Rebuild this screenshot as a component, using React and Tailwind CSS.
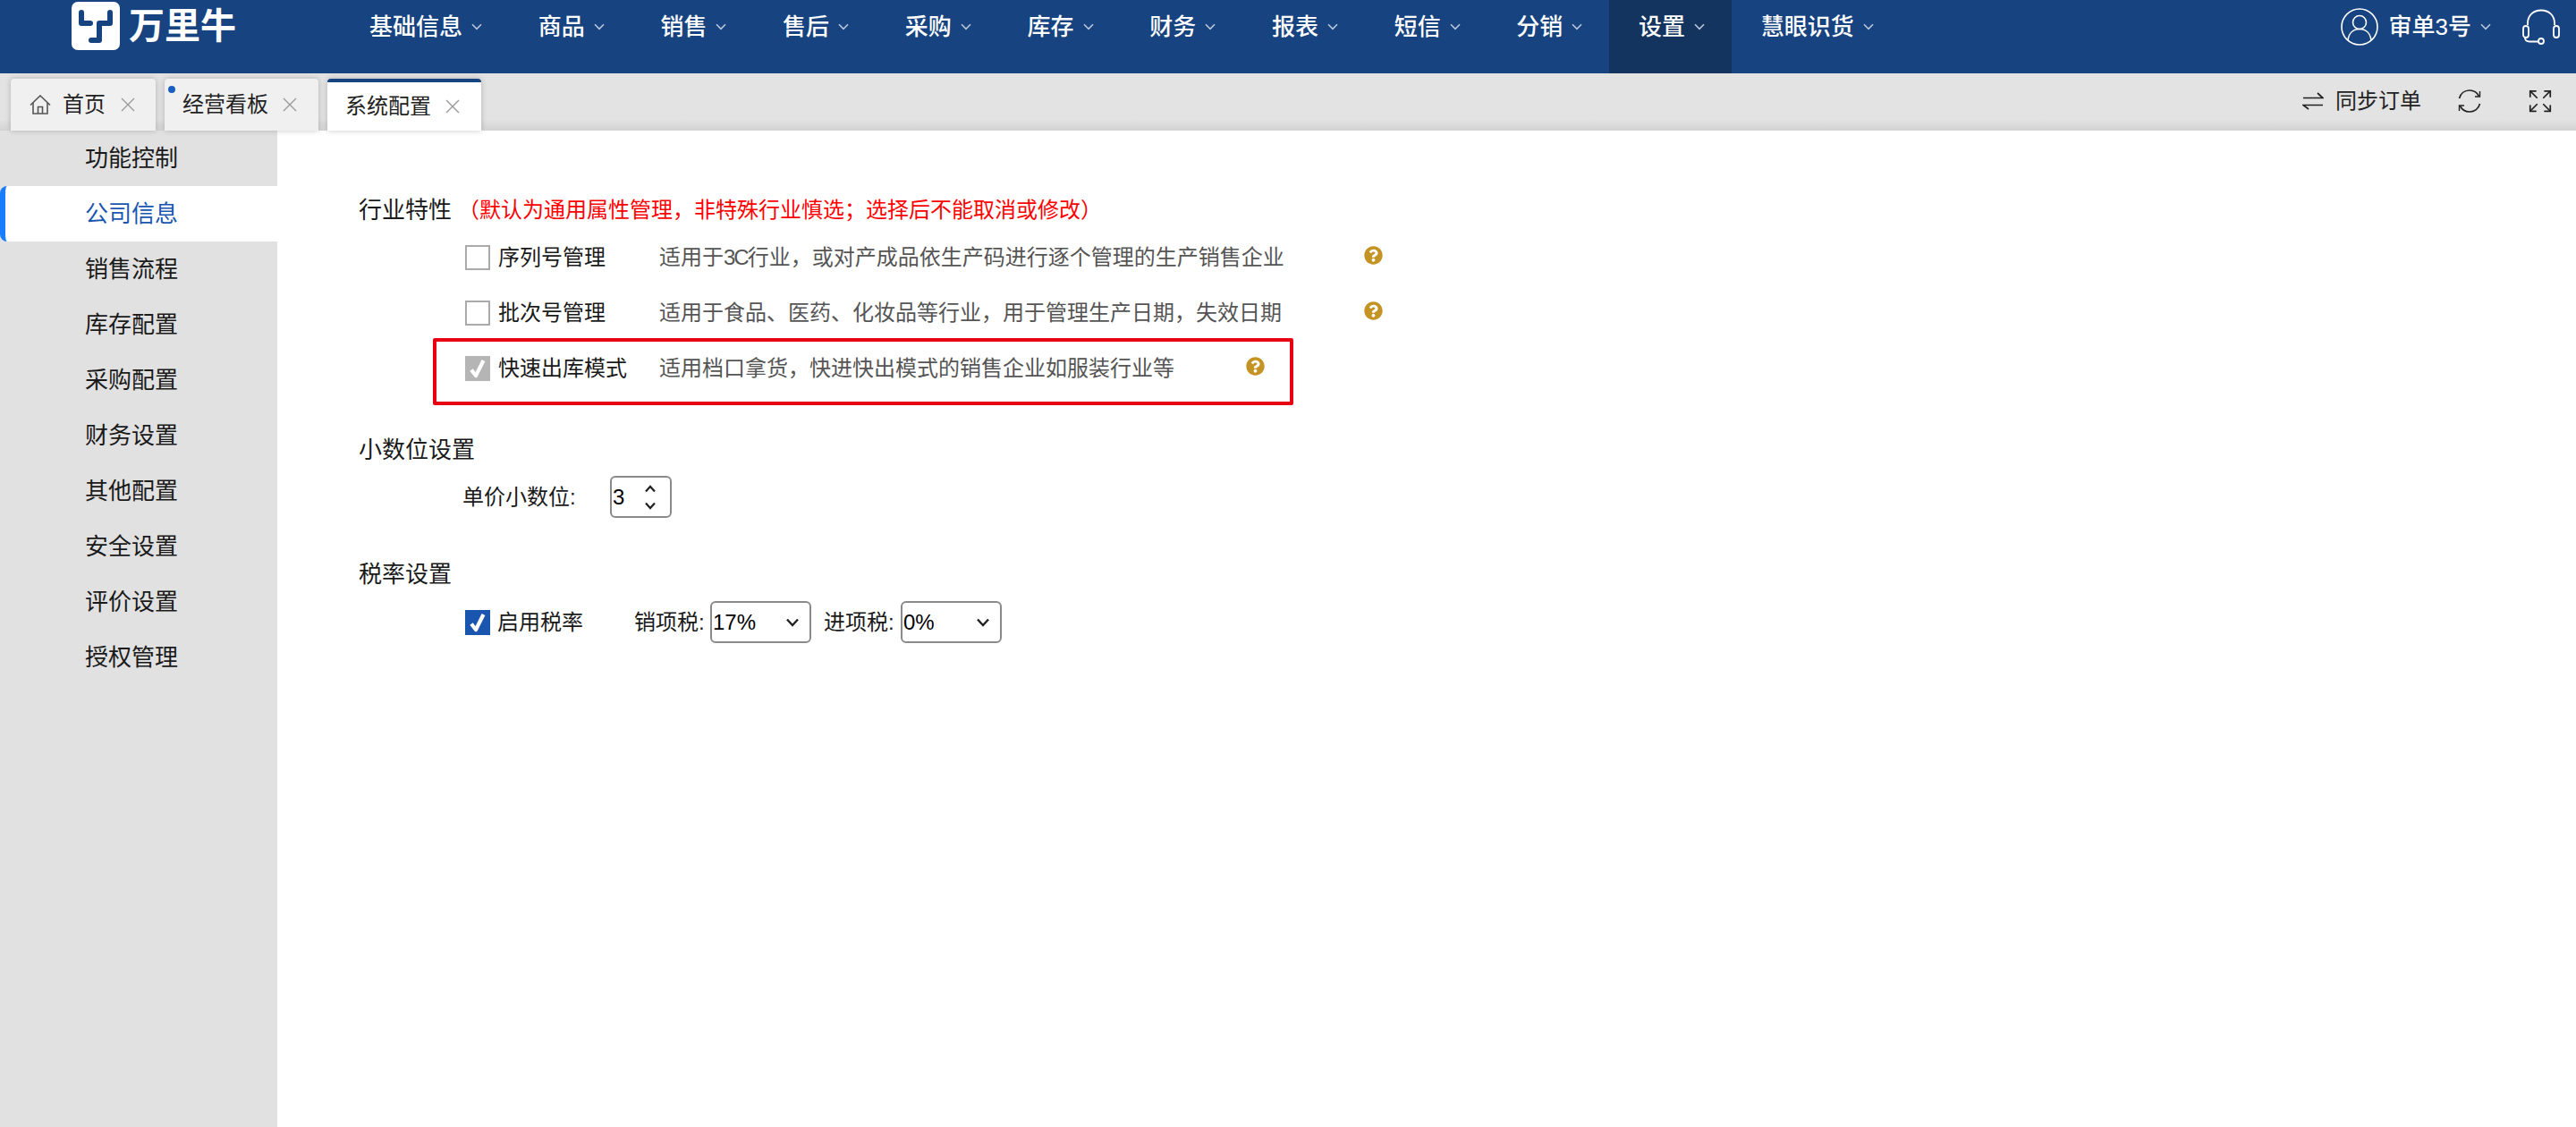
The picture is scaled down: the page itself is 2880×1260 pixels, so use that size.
import { Expand } from "lucide-react";
import { FaQuestionCircle } from "react-icons/fa";

const NAV_ITEMS = ["基础信息", "商品", "销售", "售后", "采购", "库存", "财务", "报表", "短信", "分销", "设置", "慧眼识货"];
const SIDE_ITEMS = ["功能控制", "公司信息", "销售流程", "库存配置", "采购配置", "财务设置", "其他配置", "安全设置", "评价设置", "授权管理"];

// fullwidth punctuation is escaped so it stays fullwidth
const NOTICE = "\uFF08默认为通用属性管理\uFF0C非特殊行业慎选\uFF1B选择后不能取消或修改\uFF09";
const DESC_SERIAL = (
  <>
    适用于<span className="tracking-[-2px]">3C</span>
    {"行业\uFF0C或对产成品依生产码进行逐个管理的生产销售企业"}
  </>
);
const DESC_BATCH = "适用于食品、医药、化妆品等行业\uFF0C用于管理生产日期\uFF0C失效日期";
const DESC_QUICK = "适用档口拿货\uFF0C快进快出模式的销售企业如服装行业等";

const Chevron = ({ className = "" }) => (
  <svg width="12" height="8" viewBox="0 0 12 8" fill="none" stroke="currentColor" strokeWidth="1.6" className={className}>
    <path d="M1 1.2 6 6.4 11 1.2" />
  </svg>
);

const Logo = () => (
  <div className="flex items-center mt-[-24px] ml-[80px]">
    <div className="w-[54px] h-[54px] bg-white rounded-[7px]">
      <svg width="54" height="54" viewBox="0 0 54 54" fill="none" stroke="#174380" strokeWidth="6" strokeLinejoin="round" strokeLinecap="round">
        <path d="M11 12V24H21" />
        <path d="M43 12V24H31V43H22" />
      </svg>
    </div>
    <span className="ml-[10px] text-[40px] leading-[54px] font-semibold text-white">万里牛</span>
  </div>
);

const Header = () => (
  <header className="flex h-[82px] bg-[#174380] text-white shrink-0">
    <div className="w-[380px] flex items-center">
      <Logo />
    </div>
    <nav className="flex">
      {NAV_ITEMS.map((item) => (
        <div
          key={item}
          className={`flex items-center gap-[10px] h-[82px] pl-[33px] pr-[29.7px] pb-[22px] text-[26px] font-medium ${item === "设置" ? "bg-[#143460]" : ""}`}
        >
          <span>{item}</span>
          <Chevron className="text-[#b9c6da]" />
        </div>
      ))}
    </nav>
    <div className="ml-auto flex items-center pb-[22px] pr-[18px]">
      <svg width="42" height="42" viewBox="0 0 42 42" fill="none" stroke="white" strokeWidth="1.6">
        <circle cx="21" cy="21" r="20" />
        <circle cx="21" cy="16" r="7.5" />
        <path d="M8 36c1-8 6-12.500 13-12.500S33 28 34 36" />
      </svg>
      <span className="ml-[12px] text-[26px] font-medium">审单3号</span>
      <Chevron className="ml-[10px] text-[#b9c6da]" />
      <svg width="42" height="40" viewBox="0 0 42 40" fill="none" stroke="white" strokeWidth="1.8" className="ml-[35px]">
        <path d="M6 18V16C6 7 12.500 1.500 21 1.500S36 7 36 16V18" />
        <rect x="1" y="19" width="6" height="13" rx="3" />
        <rect x="35" y="19" width="6" height="13" rx="3" />
        <path d="M3 32c0 3 2 4.500 5 4.500H18" />
        <circle cx="21" cy="36" r="3" />
      </svg>
    </div>
  </header>
);

const CloseIcon = () => (
  <svg width="16" height="16" viewBox="0 0 16 16" stroke="#9a9a9a" strokeWidth="1.4" fill="none">
    <path d="M1 1 15 15M15 1 1 15" />
  </svg>
);

const HomeIcon = () => (
  <svg width="24" height="22" viewBox="0 0 24 22" fill="none" stroke="#555" strokeWidth="1.6">
    <path d="M1 11.500 12 1 23 11.500" />
    <path d="M4 9V21H20V9" />
    <path d="M9.500 21V13.500H14.500V21" />
  </svg>
);

const Tab = ({ label, active, home, dot, widthClass, padClass, gapClass }) => (
  <div
    className={`relative flex items-center h-[58px] rounded-t-[4px] shadow-[0_0_6px_rgba(0,0,0,0.22)] text-[24px] text-[#222] ${widthClass} ${padClass} ${
      active ? "bg-white border-t-[4px] border-[#174380]" : "bg-[#f0f0f0]"
    }`}
  >
    {dot && <span className="absolute left-[4px] top-[8px] w-[8px] h-[8px] rounded-full bg-[#1a5dc0]" />}
    {home && (
      <span className="mr-[13px]">
        <HomeIcon />
      </span>
    )}
    <span>{label}</span>
    <span className={gapClass}>
      <CloseIcon />
    </span>
  </div>
);

const TabBar = () => (
  <div className="flex h-[64px] shrink-0 pl-[12px] pr-[25px] bg-linear-to-b from-[#e3e3e3] from-[80%] to-[#d3d3d3]">
    <div className="flex items-end gap-[10px]">
      <Tab label="首页" home widthClass="w-[162px]" padClass="pl-[21px]" gapClass="ml-[17px]" />
      <Tab label="经营看板" dot widthClass="w-[172px]" padClass="pl-[20px]" gapClass="ml-[16px]" />
      <Tab label="系统配置" active widthClass="w-[172px]" padClass="pl-[20px]" gapClass="ml-[16px]" />
    </div>
    <div className="ml-auto flex items-center h-[62px] text-[24px] text-[#222]">
      <svg width="24" height="22" viewBox="0 0 24 22" fill="none" stroke="#222" strokeWidth="1.7">
        <path d="M1 7.500H23L17 2" />
        <path d="M23 15.500H1L7 20" />
      </svg>
      <span className="ml-[13px]">同步订单</span>
      <svg width="28" height="28" viewBox="0 0 28 28" fill="none" stroke="#222" strokeWidth="1.7" className="ml-[40px]">
        <path d="M2.500 11C4 5.500 8.500 2 14 2c4.500 0 8.500 2.500 10.500 6.500" />
        <path d="M25.500 17C24 22.500 19.500 26 14 26c-4.500 0-8.500-2.500-10.500-6.500" />
        <path d="M25.500 3V9H20" strokeWidth="1.4" />
        <path d="M2.500 25V19H8" strokeWidth="1.4" />
      </svg>
      <Expand size={30} strokeWidth={1.4} color="#222" className="ml-[50px]" />
    </div>
  </div>
);

const Sidebar = () => (
  <aside className="w-[310px] shrink-0 bg-[#e1e1e1] text-[26px] text-[#1a1a1a]">
    {SIDE_ITEMS.map((item) =>
      item === "公司信息" ? (
        <div key={item} className="flex items-center h-[62px] pl-[89px] bg-white border-l-[6px] border-[#1a7dff] rounded-l-[8px] text-[#1a56b0]">
          {item}
        </div>
      ) : (
        <div key={item} className="flex items-center h-[62px] pl-[95px]">
          {item}
        </div>
      )
    )}
  </aside>
);

const CheckBox = ({ state }) => {
  if (state === "off") return <span className="block w-[28px] h-[28px] border-2 border-[#aaa] bg-white" />;
  return (
    <span className={`flex items-center justify-center w-[28px] h-[28px] ${state === "disabled" ? "bg-[#b5b5b5]" : "bg-[#1a56b0]"}`}>
      <svg width="20" height="22" viewBox="0 0 20 22" fill="none" stroke="white" strokeWidth="4.2" strokeLinejoin="round">
        <path d="M3 12.500 8 19 16.500 2" />
      </svg>
    </span>
  );
};

const FeatureRow = ({ state, label, desc, descWidth, children }) => (
  <div className="relative flex items-center h-[62px] pl-[119px]">
    <CheckBox state={state} />
    <span className="ml-[9px] w-[180px] text-[24px] text-[#1a1a1a]">{label}</span>
    <span className={`text-[24px] text-[#555] ${descWidth}`}>{desc}</span>
    <FaQuestionCircle size={21} color="#c49323" className="mt-[-5px]" />
    {children}
  </div>
);

const Spinner = () => (
  <div className="flex items-center justify-between w-[69px] h-[47px] pl-[1px] pr-[15px] border-2 border-[#8a8a8a] rounded-[6px] text-[24px] text-black">
    <span>3</span>
    <svg width="14" height="28" viewBox="0 0 14 28" fill="none" stroke="#222" strokeWidth="2.2">
      <path d="M2 7.500 7 2 12 7.500" />
      <path d="M2 20.500 7 26 12 20.500" />
    </svg>
  </div>
);

const SelectBox = ({ value }) => (
  <div className="flex items-center justify-between w-[113px] h-[47px] pl-[1px] pr-[11px] border-2 border-[#8a8a8a] rounded-[6px] text-[24px] text-black">
    <span>{value}</span>
    <svg width="16" height="10" viewBox="0 0 16 10" fill="none" stroke="#222" strokeWidth="2.4">
      <path d="M2 1.500 8 8 14 1.500" />
    </svg>
  </div>
);

const SectionTitle = ({ children, className = "" }) => (
  <div className={`flex items-center h-[36px] text-[26px] text-[#1a1a1a] ${className}`}>{children}</div>
);

const Content = () => (
  <main className="flex-1 bg-white pt-[71px] pl-[91px]">
    <SectionTitle>
      行业特性
      <span className="ml-[7px] text-[24px] text-[#f00]">{NOTICE}</span>
    </SectionTitle>
    <div className="mt-[4px]">
      <FeatureRow state="off" label="序列号管理" desc={DESC_SERIAL} descWidth="w-[788px]" />
      <FeatureRow state="off" label="批次号管理" desc={DESC_BATCH} descWidth="w-[788px]" />
      <FeatureRow state="disabled" label="快速出库模式" desc={DESC_QUICK} descWidth="w-[656px]">
        <div className="absolute left-[83px] top-[-3px] w-[962px] h-[75px] border-4 border-[#e60012] rounded-[2px]" />
      </FeatureRow>
    </div>

    <SectionTitle className="mt-[42px]">小数位设置</SectionTitle>
    <div className="flex items-center mt-[11px] pl-[116px]">
      <span className="w-[165px] text-[24px] text-[#1a1a1a]">单价小数位:</span>
      <Spinner />
    </div>

    <SectionTitle className="mt-[45px]">税率设置</SectionTitle>
    <div className="flex items-center mt-[12px] pl-[119px] text-[24px] text-[#1a1a1a]">
      <CheckBox state="on" />
      <span className="ml-[8px] w-[153px]">启用税率</span>
      <span className="w-[85px]">销项税:</span>
      <SelectBox value="17%" />
      <span className="ml-[14px] w-[86px]">进项税:</span>
      <SelectBox value="0%" />
    </div>
  </main>
);

export default function App() {
  return (
    <div className="flex flex-col h-[1260px] overflow-hidden bg-white font-['Liberation_Sans','Noto_Sans_CJK_SC',sans-serif]">
      <Header />
      <TabBar />
      <div className="flex flex-1">
        <Sidebar />
        <Content />
      </div>
    </div>
  );
}
